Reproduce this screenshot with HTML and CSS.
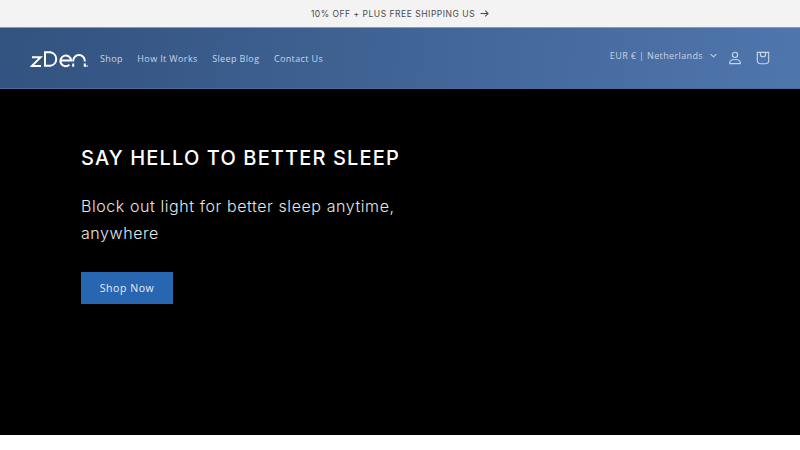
FILE: index.html
```html
<!DOCTYPE html>
<html lang="en">
<head>
<meta charset="utf-8">
<title>zDen</title>
<link rel="stylesheet" href="styles.css">
</head>
<body>
<div class="announce">
  <span class="announce-text">10% OFF + PLUS FREE SHIPPING US</span>
  <svg class="announce-arrow" viewBox="0 0 10 8" width="9" height="7" fill="none" stroke="currentColor" stroke-width="1.2"><path d="M0.5 4H9M5.8 0.8 9 4 5.8 7.2"/></svg>
</div>
<header class="header">
  <a class="logo" aria-label="zDen">
    <svg viewBox="0 0 58 18" width="58" height="18" fill="none" stroke="#fff" stroke-width="2">
      <path d="M2 7.2H10.6L2 15.9H11"/>
      <path d="M15 1.2V16.8M15 2.2H20.5A6.9 6.9 0 0 1 20.5 15.8H15"/>
      <path d="M30.6 10.4H41A5.3 5.3 0 1 0 39.4 14.7"/>
      <path d="M43.2 11.4V10.8A5.8 5.8 0 0 1 54.8 10.8V11.4"/>
      <path d="M43.2 13.4V16.8M54.8 13.4V16.8"/>
      <circle cx="55.8" cy="16" r="0.7" fill="#fff" stroke="none"/>
      <circle cx="57.2" cy="16" r="0.7" fill="#fff" stroke="none"/>
    </svg>
  </a>
  <nav class="nav">
    <a>Shop</a>
    <a>How It Works</a>
    <a>Sleep Blog</a>
    <a>Contact Us</a>
  </nav>
  <div class="tools">
    <div class="locale">
      <span>EUR € | Netherlands</span>
      <svg viewBox="0 0 8 5" width="7" height="5" fill="none" stroke="currentColor" stroke-width="1.2"><path d="M0.7 0.8 4 4 7.3 0.8"/></svg>
    </div>
    <svg class="icon" viewBox="0 0 16 16" width="14" height="14" fill="none" stroke="currentColor" stroke-width="1.3"><circle cx="8" cy="4.4" r="3"/><path d="M2 14.5H14V13.2C14 10.8 11.5 9.7 8 9.7S2 10.8 2 13.2Z"/></svg>
    <svg class="icon" viewBox="0 0 16 16" width="14" height="14" fill="none" stroke="currentColor" stroke-width="1.3"><path d="M1.5 1.6H14.5V11A3.6 3.6 0 0 1 10.9 14.6H5.1A3.6 3.6 0 0 1 1.5 11Z"/><path d="M5 1.7V3.6A3 3 0 0 0 11 3.6V1.7"/></svg>
  </div>
</header>
<main class="hero">
  <h1 class="hero-title">SAY HELLO TO BETTER SLEEP</h1>
  <p class="hero-text">Block out light for better sleep anytime, anywhere</p>
  <a class="btn">Shop Now</a>
</main>
<div class="after"></div>
</body>
</html>
```
FILE: styles.css
```css
* { box-sizing: border-box; }
html, body { margin: 0; padding: 0; }
body { background: #fff; overflow: hidden; height: 450px; font-family: "Open Sans", sans-serif; }
.announce {
  height: 28px;
  background: #f3f3f3;
  border-bottom: 1px solid #8c9aae;
  color: #4a4a4a;
  display: flex;
  align-items: center;
  justify-content: center;
  gap: 5px;
}
.announce-text {
  font-family: Inter, sans-serif;
  font-size: 8.5px;
  font-weight: 400;
  letter-spacing: 0.52px;
}
.header {
  height: 61px;
  background: linear-gradient(95deg, #32527f 0%, #4f76ad 100%);
  border-bottom: 1px solid #4a6c9e;
  display: flex;
  align-items: center;
  padding: 0 30px;
  color: #c9d4e4;
}
.logo { display: block; width: 58px; height: 18px; margin-top: 1px; }
.nav { display: flex; gap: 14.5px; margin-left: 12px; font-size: 9px; letter-spacing: 0.37px; }
.tools { margin-left: auto; display: flex; align-items: center; }
.locale { display: flex; align-items: center; gap: 7px; font-size: 9px; letter-spacing: 0.37px; margin-top: -5px; margin-right: 11px; }
.tools .icon { margin-left: 14px; display: block; }
.locale + .icon { margin-left: 0; }
.hero {
  height: 346px;
  background: #000;
  padding: 55px 0 0 81px;
  color: #fff;
}
.hero-title {
  margin: 0;
  font-family: Inter, sans-serif;
  font-size: 20px;
  font-weight: 500;
  line-height: 28px;
  letter-spacing: 1.14px;
}
.hero-text {
  margin: 21px 0 0;
  width: 340px;
  font-family: Inter, sans-serif;
  font-size: 16px;
  font-weight: 300;
  line-height: 27px;
  letter-spacing: 0.58px;
  color: #e6e6e6;
}
.btn {
  display: flex;
  align-items: center;
  justify-content: center;
  width: 92px;
  height: 32px;
  margin-top: 25px;
  background: #2866b1;
  color: #e8eef6;
  font-size: 10.5px;
  letter-spacing: 0.55px;
}
.after { height: 15px; background: #fff; }
```
